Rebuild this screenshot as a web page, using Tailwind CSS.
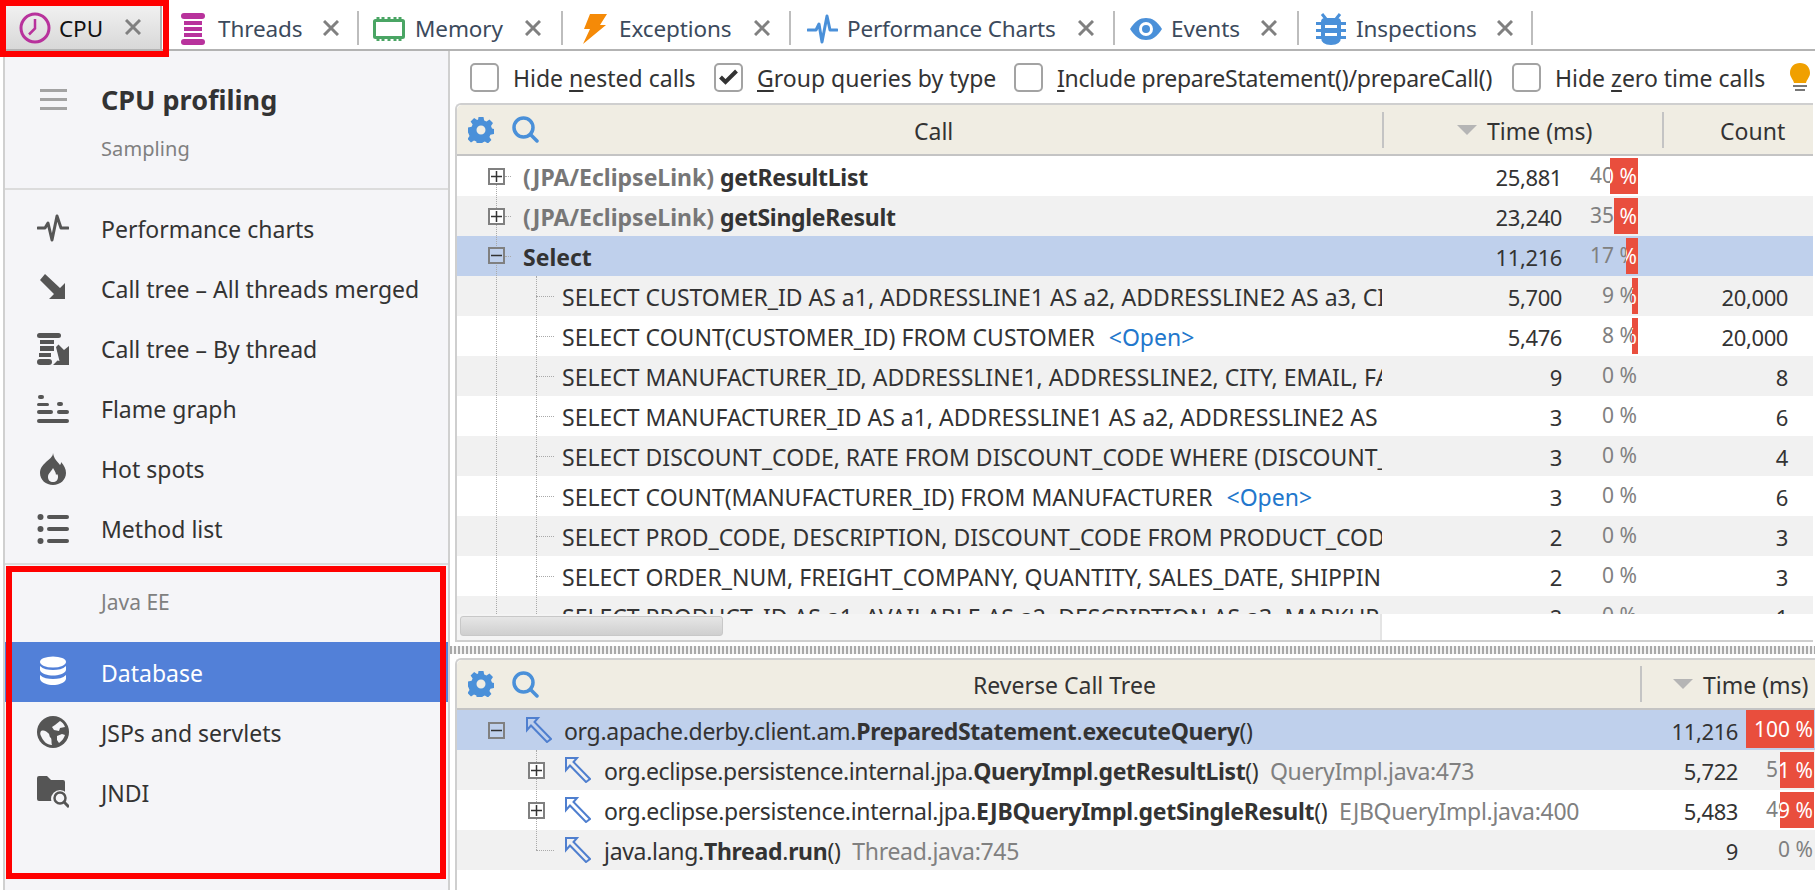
<!DOCTYPE html>
<html lang="en"><head><meta charset="utf-8"><title>CPU profiling</title>
<script src="https://cdn.jsdelivr.net/npm/@tailwindcss/browser@4"></script></head>
<body class="bg-white">
<div class="relative w-[1815px] h-[890px] overflow-hidden flex flex-col bg-white text-[#333] font-['Noto_Sans',sans-serif] text-[23px] leading-none">

<!-- tabs -->
<div class="h-[51px] shrink-0 flex border-b-[2px] border-[#b3b3b3] relative text-[22.5px] tracking-[-0.1px]">
  <div class="w-[162px] h-[49px] ml-0 flex items-center bg-gradient-to-b from-[#f4f4f4] to-[#d8d8d8] border-r-[2px] border-[#b0b0b0] relative text-[#111]">
    <svg class="absolute left-[19px] top-[12px]" width="32" height="32" viewBox="0 0 32 32" fill="none" stroke="#b8329c" stroke-width="3"><circle cx="16" cy="16" r="14"/><path d="M16 7v9.5l-6 6" stroke-width="2.5"/></svg>
    <span class="absolute left-[59px] top-[18px]">CPU</span>
    <svg class="absolute left-[125px] top-[19px]" width="16" height="16" viewBox="0 0 16 16" stroke="#808080" stroke-width="3"><path d="M1 1l14 14M15 1L1 15"/></svg>
  </div>
  <div class="flex items-center h-[49px] w-[197px] relative">
    <svg class="ml-[19px] mt-[8px]" width="24" height="32" viewBox="0 0 24 32" fill="#b8329c"><rect x="0" y="0" width="24" height="6" rx="3"/><rect x="3" y="8" width="18" height="4"/><rect x="3" y="14" width="18" height="4"/><rect x="3" y="20" width="18" height="4"/><rect x="0" y="26" width="24" height="6" rx="3"/></svg>
    <span class="ml-[13px] mt-[9px] w-[82px] text-[#3c4a5c]">Threads</span>
    <svg class="ml-[23px] mt-[6px]" width="16" height="16" viewBox="0 0 16 16" stroke="#808080" stroke-width="3"><path d="M1 1l14 14M15 1L1 15"/></svg>
    <div class="absolute right-0 top-[11px] w-[2px] h-[34px] bg-[#bdbdbd]"></div>
  </div>
  <div class="flex items-center h-[49px] w-[204px] relative">
    <svg class="ml-[14px] mt-[8px]" width="32" height="24" viewBox="0 0 32 24" fill="none" stroke="#4aa564"><rect x="1.5" y="3.5" width="29" height="17" rx="1" stroke-width="3"/><path d="M5 0v3M10 0v3M16 0v3M22 0v3M27 0v3M5 21v3M10 21v3M16 21v3M22 21v3M27 21v3" stroke-width="3"/></svg>
    <span class="ml-[10px] mt-[9px] w-[88px] text-[#3c4a5c]">Memory</span>
    <svg class="ml-[22px] mt-[6px]" width="16" height="16" viewBox="0 0 16 16" stroke="#808080" stroke-width="3"><path d="M1 1l14 14M15 1L1 15"/></svg>
    <div class="absolute right-0 top-[11px] w-[2px] h-[34px] bg-[#bdbdbd]"></div>
  </div>
  <div class="flex items-center h-[49px] w-[228px] relative">
    <svg class="ml-[20px] mt-[8px]" width="24" height="30" viewBox="0 0 24 30" fill="#f58a07"><path d="M7 0h17l-7 11h6L0 30l7-15H1z"/></svg>
    <span class="ml-[12px] mt-[9px] w-[112px] text-[#3c4a5c]">Exceptions</span>
    <svg class="ml-[23px] mt-[6px]" width="16" height="16" viewBox="0 0 16 16" stroke="#808080" stroke-width="3"><path d="M1 1l14 14M15 1L1 15"/></svg>
    <div class="absolute right-0 top-[11px] w-[2px] h-[34px] bg-[#bdbdbd]"></div>
  </div>
  <div class="flex items-center h-[49px] w-[324px] relative">
    <svg class="ml-[16px] mt-[8px]" width="31" height="30" viewBox="0 0 31 30" fill="none" stroke="#4a90d9" stroke-width="3" stroke-linecap="round" stroke-linejoin="round"><path d="M1 16h8l3-6 3 18 5-26 3 14h7"/></svg>
    <span class="ml-[9px] mt-[9px] w-[208px] whitespace-nowrap text-[#3c4a5c] tracking-[-0.2px]">Performance Charts</span>
    <svg class="ml-[23px] mt-[6px]" width="16" height="16" viewBox="0 0 16 16" stroke="#808080" stroke-width="3"><path d="M1 1l14 14M15 1L1 15"/></svg>
    <div class="absolute right-0 top-[11px] w-[2px] h-[34px] bg-[#bdbdbd]"></div>
  </div>
  <div class="flex items-center h-[49px] w-[184px] relative">
    <svg class="ml-[15px] mt-[8px]" width="32" height="22" viewBox="0 0 32 22"><path fill="#4a90d9" d="M0 11C5 3 10 0 16 0s11 3 16 11c-5 8-10 11-16 11S5 19 0 11z"/><circle cx="16" cy="11" r="7" fill="#fff"/><circle cx="16" cy="11" r="4" fill="#4a90d9"/></svg>
    <span class="ml-[9px] mt-[9px] w-[68px] text-[#3c4a5c]">Events</span>
    <svg class="ml-[22px] mt-[6px]" width="16" height="16" viewBox="0 0 16 16" stroke="#808080" stroke-width="3"><path d="M1 1l14 14M15 1L1 15"/></svg>
    <div class="absolute right-0 top-[11px] w-[2px] h-[34px] bg-[#bdbdbd]"></div>
  </div>
  <div class="flex items-center h-[49px] w-[234px] relative">
    <svg class="ml-[17px] mt-[8px]" width="30" height="32" viewBox="0 0 30 32" fill="#4a90d9"><path d="M6 1l4 5M24 1l-4 5" stroke="#4a90d9" stroke-width="3"/><path d="M5 9q0-4 4-4h12q4 0 4 4v15q0 8-10 8T5 24z"/><rect x="0" y="9" width="30" height="3"/><rect x="0" y="16" width="30" height="3"/><rect x="0" y="23" width="30" height="3"/><rect x="9" y="12" width="12" height="3" fill="#fff"/><rect x="9" y="20" width="12" height="3" fill="#fff"/></svg>
    <span class="ml-[10px] mt-[9px] w-[118px] text-[#3c4a5c]">Inspections</span>
    <svg class="ml-[23px] mt-[6px]" width="16" height="16" viewBox="0 0 16 16" stroke="#808080" stroke-width="3"><path d="M1 1l14 14M15 1L1 15"/></svg>
    <div class="absolute right-0 top-[11px] w-[2px] h-[34px] bg-[#bdbdbd]"></div>
  </div>
</div>

<div class="flex flex-1 min-h-0">
  <!-- sidebar -->
  <aside class="w-[447px] shrink-0 ml-[3px] bg-[#f5f5f8] border-l-[2px] border-r-[2px] border-[#d0d0d0] flex flex-col">
    <div class="h-[139px] shrink-0 relative border-b-[2px] border-[#dcdcdc]">
      <div class="absolute left-[35px] top-[38px] w-[27px] flex flex-col gap-[6px]"><div class="h-[3px] bg-[#a3a3a3]"></div><div class="h-[3px] bg-[#a3a3a3]"></div><div class="h-[3px] bg-[#a3a3a3]"></div></div>
      <div class="pl-[96px] pt-[35px] font-bold text-[27px] text-[#333]">CPU profiling</div>
      <div class="pl-[96px] pt-[26px] text-[20px] tracking-[0.1px] text-[#808080]">Sampling</div>
    </div>
    <nav class="flex flex-col pt-[9px]">
      <div class="h-[60px] flex items-center pl-[32px]"><svg width="32" height="32" viewBox="0 0 32 32" fill="none" stroke="#555" stroke-width="3" stroke-linecap="round" stroke-linejoin="round"><path d="M1 15h7l3-5 4 17 5-24 4 12h7"/></svg><span class="ml-[32px]">Performance charts</span></div>
      <div class="h-[60px] flex items-center pl-[32px]"><svg width="32" height="32" viewBox="0 0 32 32" fill="#555"><path d="M8 1l15 14 5-5v16H12l5-5L3 7z"/></svg><span class="ml-[32px]">Call tree – All threads merged</span></div>
      <div class="h-[60px] flex items-center pl-[32px]"><svg width="32" height="32" viewBox="0 0 32 32" fill="#555"><rect x="0" y="0" width="24" height="5" rx="2.500"/><rect x="3" y="7" width="14" height="4"/><rect x="3" y="13" width="14" height="5"/><rect x="2" y="20" width="12" height="4"/><rect x="0" y="26" width="15" height="6" rx="3"/><path d="M19 14l2.500-2.500 5.500 5.500 5-4v19H16l4.500-4.500 2 .5z"/></svg><span class="ml-[32px]">Call tree – By thread</span></div>
      <div class="h-[60px] flex items-center pl-[32px]"><svg width="32" height="32" viewBox="0 0 32 32" fill="#555"><rect x="1" y="2" width="6" height="4" rx="2"/><rect x="20" y="9" width="6" height="4" rx="2"/><rect x="0" y="10" width="12" height="3" rx="1.5"/><rect x="0" y="17" width="16" height="4" rx="2"/><rect x="20" y="17" width="12" height="4" rx="2"/><rect x="0" y="26" width="32" height="4" rx="2"/></svg><span class="ml-[32px]">Flame graph</span></div>
      <div class="h-[60px] flex items-center pl-[32px]"><svg width="32" height="32" viewBox="0 0 32 32" fill="#555"><path fill-rule="evenodd" d="M16 0c1 6 4 8 7 12 1-1 1-2 1-3 3 3 5 7 5 11 0 7-6 12-13 12S3 27 3 20c0-5 3-8 6-11 3-3 7-5 7-9zm0 15c-1 3-5 5-5 9 0 3 2 5 5 5s5-2 5-5c0-1 0-2-1-3l-1 1c0-3-2-5-3-7z"/></svg><span class="ml-[32px]">Hot spots</span></div>
      <div class="h-[60px] flex items-center pl-[32px]"><svg width="32" height="32" viewBox="0 0 32 32" fill="#555"><circle cx="3.5" cy="4" r="3"/><circle cx="3.5" cy="16" r="3"/><circle cx="3.5" cy="28" r="3"/><rect x="10" y="2" width="22" height="4" rx="2"/><rect x="10" y="14" width="22" height="4" rx="2"/><rect x="10" y="26" width="22" height="4" rx="2"/></svg><span class="ml-[32px]">Method list</span></div>
    </nav>
    <div class="h-[2px] mt-[4px] bg-[#dcdcdc]"></div>
    <div class="h-[77px] shrink-0 pl-[96px] pt-[27px] text-[21px] text-[#808080]">Java EE</div>
    <div class="h-[60px] flex items-center pl-[32px] bg-[#5280d8] text-white"><svg width="32" height="32" viewBox="0 0 32 32" fill="#fff"><ellipse cx="16" cy="6" rx="13" ry="5.5"/><path d="M3 10c3 3 8 4 13 4s10-1 13-4v4c-1 4-8 5.5-13 5.5S4 18 3 14zM3 19c3 3 8 4 13 4s10-1 13-4v4c-1 4-8 6-13 6s-12-2-13-6z"/></svg><span class="ml-[32px] pt-[2px]">Database</span></div>
    <div class="h-[60px] flex items-center pl-[32px]"><svg width="32" height="32" viewBox="0 0 32 32"><circle cx="16" cy="16" r="16" fill="#555"/><path fill="#f5f5f8" d="M4 15c3-1 5 0 7 2 2 1 1 4 3 5 1 2 0 5 1 7-5 0-9-4-11-9-1-2-1-3 0-5zM18 9l5-4c2 1 4 3 5 6l-5 1-1 3-5-1-2-3zM20 20l5-2 3 1c-1 3-3 6-6 8l-2-3z"/></svg><span class="ml-[32px] pt-[2px]">JSPs and servlets</span></div>
    <div class="h-[60px] flex items-center pl-[32px]"><svg width="32" height="32" viewBox="0 0 32 32"><path fill="#555" d="M0 2q0-2 2-2h8l4 4h12q2 0 2 2v18q0 1-1 1H2q-2 0-2-2z"/><circle cx="23" cy="23" r="9" fill="#f5f5f8"/><circle cx="23" cy="22" r="5.5" fill="none" stroke="#555" stroke-width="2.5"/><path d="M27 26l5 5" stroke="#555" stroke-width="3"/></svg><span class="ml-[32px] pt-[2px]">JNDI</span></div>
  </aside>

  <!-- right -->
  <main class="flex-1 min-w-0 flex flex-col">
    <div class="h-[52px] shrink-0 flex items-center text-[#333] pl-[20px] relative">
      <div class="w-[29px] h-[29px] rounded-[5px] border-[2px] border-[#a3a3a3] bg-white"></div>
      <span class="ml-[14px] pt-[2px] w-[180px] whitespace-nowrap">Hide <u class="decoration-[2px] underline-offset-[3px]">n</u>ested calls</span>
      <div class="ml-[21px] w-[29px] h-[29px] rounded-[5px] border-[2px] border-[#a3a3a3] bg-white flex items-center justify-center"><svg width="19" height="16" viewBox="0 0 19 16" fill="none" stroke="#333" stroke-width="4"><path d="M1.5 8l5 5L17.5 2"/></svg></div>
      <span class="ml-[14px] pt-[2px] w-[236px] whitespace-nowrap"><u class="decoration-[2px] underline-offset-[3px]">G</u>roup queries by type</span>
      <div class="ml-[21px] w-[29px] h-[29px] rounded-[5px] border-[2px] border-[#a3a3a3] bg-white"></div>
      <span class="ml-[14px] pt-[2px] w-[434px] whitespace-nowrap tracking-[-0.23px]"><u class="decoration-[2px] underline-offset-[3px]">I</u>nclude prepareStatement()/prepareCall()</span>
      <div class="ml-[21px] w-[29px] h-[29px] rounded-[5px] border-[2px] border-[#a3a3a3] bg-white"></div>
      <span class="ml-[14px] pt-[2px] w-[208px] whitespace-nowrap">Hide <u class="decoration-[2px] underline-offset-[3px]">z</u>ero time calls</span>
      <svg class="ml-[27px] shrink-0" width="20" height="28" viewBox="0 0 20 28"><path fill="#f0a000" d="M10 0c6 0 10 4 10 10 0 4-3 6-4 10H4C3 16 0 14 0 10 0 4 4 0 10 0z"/><rect x="3" y="22" width="14" height="2" fill="#777"/><rect x="5" y="26" width="10" height="2" fill="#777"/></svg>
    </div>

    <!-- top panel -->
    <section class="ml-[5px] w-[1358px] h-[539px] shrink-0 flex flex-col border-t-[2px] border-l-[2px] border-b-[2px] border-[#cfcfcf] rounded-tl-[6px] text-[#333]">
      <div class="h-[49px] shrink-0 flex items-center bg-[#f0ede3] rounded-tl-[5px] [&_span]:pt-[3px]">
        <div class="w-[925px] flex items-center shrink-0">
          <svg class="ml-[11px]" width="26" height="26" viewBox="0 0 26 26" fill="#4a90d9"><path fill-rule="evenodd" d="M10.5 0h5l.7 3.6 2.3 1 3-2 3.5 3.5-2 3 1 2.3 2 .6v5l-3.6.7-1 2.3 2 3-3.5 3.5-3-2-2.3 1-.6 2.5h-5l-.7-3.6-2.3-1-3 2-3.5-3.5 2-3-1-2.3L0 15.500v-5l3.600-.7 1-2.300-2-3L6.100 1l3 2 1-.4zM13 8.500a4.500 4.500 0 1 0 0 9 4.500 4.500 0 0 0 0-9z"/></svg>
          <svg class="ml-[18px]" width="27" height="27" viewBox="0 0 27 27" fill="none" stroke="#4a90d9" stroke-width="3.500" stroke-linecap="round"><circle cx="11.500" cy="11.500" r="9.500"/><path d="M18.500 18.500l6.500 6.500"/></svg>
          <span class="ml-[375px]">Call</span>
        </div>
        <div class="w-[2px] h-[36px] bg-[#c4c4c4] shrink-0"></div>
        <div class="w-[278px] shrink-0 flex items-center"><div class="ml-[73px] w-0 h-0 border-x-[10px] border-x-transparent border-t-[10px] border-t-[#b5b5b5]"></div><span class="ml-[10px] whitespace-nowrap">Time (ms)</span></div>
        <div class="w-[2px] h-[36px] bg-[#c4c4c4] shrink-0"></div>
        <span class="ml-[56px]">Count</span>
      </div>
      <div class="h-[2px] shrink-0 bg-[#c4c4c4]"></div>
      <div class="h-[458px] shrink-0 overflow-hidden relative whitespace-nowrap [&>div>div:not(:nth-child(3))]:pt-[2px]">
        <div class="flex h-10 items-center bg-white"><div class="w-[925px] shrink-0 pl-[66px] font-bold"><span class="text-[#777]">(JPA/EclipseLink)</span> <span class="text-[#333] tracking-[-0.3px]">getResultList</span></div><div class="w-[180px] text-right text-[22px] tracking-[-0.4px]">25,881</div><div class="relative w-[76px] h-full flex items-center justify-end pr-[1px] pb-[2px] text-[21px] text-[#808080]">40 %<div class="absolute right-0 inset-y-[2px] w-[28px] bg-[#e94e3d] overflow-hidden flex items-center justify-end pr-[1px] text-white">40&nbsp;%</div></div></div>
        <div class="flex h-10 items-center bg-[#f1f1f1]"><div class="w-[925px] shrink-0 pl-[66px] font-bold"><span class="text-[#777]">(JPA/EclipseLink)</span> <span class="text-[#333] tracking-[-0.3px]">getSingleResult</span></div><div class="w-[180px] text-right text-[22px] tracking-[-0.4px]">23,240</div><div class="relative w-[76px] h-full flex items-center justify-end pr-[1px] pb-[2px] text-[21px] text-[#808080]">35 %<div class="absolute right-0 inset-y-[2px] w-[24px] bg-[#e94e3d] overflow-hidden flex items-center justify-end pr-[1px] text-white">35&nbsp;%</div></div></div>
        <div class="flex h-10 items-center bg-[#bfd0ec]"><div class="w-[925px] shrink-0 pl-[66px] font-bold">Select</div><div class="w-[180px] text-right text-[22px] tracking-[-0.4px]">11,216</div><div class="relative w-[76px] h-full flex items-center justify-end pr-[1px] pb-[2px] text-[21px] text-[#808080]">17 %<div class="absolute right-0 inset-y-[2px] w-[12px] bg-[#e94e3d] overflow-hidden flex items-center justify-end pr-[1px] text-white">17&nbsp;%</div></div></div>
        <div class="flex h-10 items-center bg-[#f1f1f1]"><div class="w-[925px] shrink-0 pl-[105px] overflow-hidden leading-[32px]">SELECT CUSTOMER_ID AS a1, ADDRESSLINE1 AS a2, ADDRESSLINE2 AS a3, CITY AS a4</div><div class="w-[180px] text-right text-[22px] tracking-[-0.4px]">5,700</div><div class="relative w-[76px] h-full flex items-center justify-end pr-[1px] pb-[2px] text-[21px] text-[#808080]">9 %<div class="absolute right-0 inset-y-[2px] w-[6px] bg-[#e94e3d] overflow-hidden flex items-center justify-end pr-[1px] text-white">9&nbsp;%</div></div><div class="w-[150px] text-right text-[22px] tracking-[-0.4px]">20,000</div></div>
        <div class="flex h-10 items-center bg-white"><div class="w-[925px] shrink-0 pl-[105px] overflow-hidden leading-[32px]">SELECT COUNT(CUSTOMER_ID) FROM CUSTOMER <span class="ml-[8px] text-[#2277cc]">&lt;Open&gt;</span></div><div class="w-[180px] text-right text-[22px] tracking-[-0.4px]">5,476</div><div class="relative w-[76px] h-full flex items-center justify-end pr-[1px] pb-[2px] text-[21px] text-[#808080]">8 %<div class="absolute right-0 inset-y-[2px] w-[6px] bg-[#e94e3d] overflow-hidden flex items-center justify-end pr-[1px] text-white">8&nbsp;%</div></div><div class="w-[150px] text-right text-[22px] tracking-[-0.4px]">20,000</div></div>
        <div class="flex h-10 items-center bg-[#f1f1f1]"><div class="w-[925px] shrink-0 pl-[105px] overflow-hidden leading-[32px]">SELECT MANUFACTURER_ID, ADDRESSLINE1, ADDRESSLINE2, CITY, EMAIL, FAX, NAME</div><div class="w-[180px] text-right text-[22px] tracking-[-0.4px]">9</div><div class="w-[76px] flex justify-end pr-[1px] pb-[2px] text-[21px] text-[#808080]">0 %</div><div class="w-[150px] text-right text-[22px] tracking-[-0.4px]">8</div></div>
        <div class="flex h-10 items-center bg-white"><div class="w-[925px] shrink-0 pl-[105px] overflow-hidden leading-[32px]">SELECT MANUFACTURER_ID AS a1, ADDRESSLINE1 AS a2, ADDRESSLINE2 AS a3, CITY</div><div class="w-[180px] text-right text-[22px] tracking-[-0.4px]">3</div><div class="w-[76px] flex justify-end pr-[1px] pb-[2px] text-[21px] text-[#808080]">0 %</div><div class="w-[150px] text-right text-[22px] tracking-[-0.4px]">6</div></div>
        <div class="flex h-10 items-center bg-[#f1f1f1]"><div class="w-[925px] shrink-0 pl-[105px] overflow-hidden leading-[32px]">SELECT DISCOUNT_CODE, RATE FROM DISCOUNT_CODE WHERE (DISCOUNT_CODE = ?)</div><div class="w-[180px] text-right text-[22px] tracking-[-0.4px]">3</div><div class="w-[76px] flex justify-end pr-[1px] pb-[2px] text-[21px] text-[#808080]">0 %</div><div class="w-[150px] text-right text-[22px] tracking-[-0.4px]">4</div></div>
        <div class="flex h-10 items-center bg-white"><div class="w-[925px] shrink-0 pl-[105px] overflow-hidden leading-[32px]">SELECT COUNT(MANUFACTURER_ID) FROM MANUFACTURER <span class="ml-[8px] text-[#2277cc]">&lt;Open&gt;</span></div><div class="w-[180px] text-right text-[22px] tracking-[-0.4px]">3</div><div class="w-[76px] flex justify-end pr-[1px] pb-[2px] text-[21px] text-[#808080]">0 %</div><div class="w-[150px] text-right text-[22px] tracking-[-0.4px]">6</div></div>
        <div class="flex h-10 items-center bg-[#f1f1f1]"><div class="w-[925px] shrink-0 pl-[105px] overflow-hidden leading-[32px]">SELECT PROD_CODE, DESCRIPTION, DISCOUNT_CODE FROM PRODUCT_CODE WHERE (X)</div><div class="w-[180px] text-right text-[22px] tracking-[-0.4px]">2</div><div class="w-[76px] flex justify-end pr-[1px] pb-[2px] text-[21px] text-[#808080]">0 %</div><div class="w-[150px] text-right text-[22px] tracking-[-0.4px]">3</div></div>
        <div class="flex h-10 items-center bg-white"><div class="w-[925px] shrink-0 pl-[105px] overflow-hidden leading-[32px]">SELECT ORDER_NUM, FREIGHT_COMPANY, QUANTITY, SALES_DATE, SHIPPING_COST, X</div><div class="w-[180px] text-right text-[22px] tracking-[-0.4px]">2</div><div class="w-[76px] flex justify-end pr-[1px] pb-[2px] text-[21px] text-[#808080]">0 %</div><div class="w-[150px] text-right text-[22px] tracking-[-0.4px]">3</div></div>
        <div class="flex h-10 items-center bg-[#f1f1f1]"><div class="w-[925px] shrink-0 pl-[105px] overflow-hidden leading-[32px]">SELECT PRODUCT_ID AS a1, AVAILABLE AS a2, DESCRIPTION AS a3, MARKUP AS a4, X</div><div class="w-[180px] text-right text-[22px] tracking-[-0.4px]">2</div><div class="w-[76px] flex justify-end pr-[1px] pb-[2px] text-[21px] text-[#808080]">0 %</div><div class="w-[150px] text-right text-[22px] tracking-[-0.4px]">1</div></div>
        <!-- tree connectors -->
        <div class="absolute left-[39px] top-[28px] h-[430px] border-l border-dotted border-[#aaa]"></div>
        <div class="absolute left-[79px] top-[120px] h-[340px] border-l border-dotted border-[#aaa]"></div>
        <div class="absolute left-[48px] top-[20px] w-[6px] border-t border-dotted border-[#aaa]"></div>
        <div class="absolute left-[48px] top-[60px] w-[6px] border-t border-dotted border-[#aaa]"></div>
        <div class="absolute left-[48px] top-[100px] w-[6px] border-t border-dotted border-[#aaa]"></div>
        <div class="absolute left-[79px] top-[140px] w-[18px] border-t border-dotted border-[#aaa]"></div>
        <div class="absolute left-[79px] top-[180px] w-[18px] border-t border-dotted border-[#aaa]"></div>
        <div class="absolute left-[79px] top-[220px] w-[18px] border-t border-dotted border-[#aaa]"></div>
        <div class="absolute left-[79px] top-[260px] w-[18px] border-t border-dotted border-[#aaa]"></div>
        <div class="absolute left-[79px] top-[300px] w-[18px] border-t border-dotted border-[#aaa]"></div>
        <div class="absolute left-[79px] top-[340px] w-[18px] border-t border-dotted border-[#aaa]"></div>
        <div class="absolute left-[79px] top-[380px] w-[18px] border-t border-dotted border-[#aaa]"></div>
        <div class="absolute left-[79px] top-[420px] w-[18px] border-t border-dotted border-[#aaa]"></div>
        <div class="absolute left-[31px] top-[12px] w-[17px] h-[17px] border-[2px] border-[#808080] bg-white flex items-center justify-center"><svg width="11" height="11" viewBox="0 0 11 11" stroke="#333" stroke-width="1.500"><path d="M0 5.500h11M5.500 0v11"/></svg></div>
        <div class="absolute left-[31px] top-[52px] w-[17px] h-[17px] border-[2px] border-[#808080] bg-white flex items-center justify-center"><svg width="11" height="11" viewBox="0 0 11 11" stroke="#333" stroke-width="1.500"><path d="M0 5.500h11M5.500 0v11"/></svg></div>
        <div class="absolute left-[31px] top-[91px] w-[17px] h-[17px] border-[2px] border-[#808080] bg-[#bfd0ec] flex items-center justify-center"><svg width="11" height="11" viewBox="0 0 11 11" stroke="#333" stroke-width="1.500"><path d="M0 5.500h11"/></svg></div>
      </div>
      <div class="flex-1 flex min-h-0 bg-white">
        <div class="w-[925px] bg-[#f4f4f4] border-r-[2px] border-[#e4e4e4] pl-[3px] pt-[2px]"><div class="w-[263px] h-[20px] rounded-[3px] border border-[#c8c8c8] bg-gradient-to-b from-[#e6e6e6] to-[#cfcfcf]"></div></div>
      </div>
    </section>

    <!-- splitter -->
    <div class="h-[16px] shrink-0 flex items-center"><div class="w-full h-[8px] bg-[repeating-linear-gradient(90deg,#a9a9a9_0,#a9a9a9_2px,#f2f2f2_2px,#f2f2f2_4px)]"></div></div>

    <!-- bottom panel -->
    <section class="ml-[5px] flex-1 min-h-0 flex flex-col border-t-[2px] border-l-[2px] border-[#cfcfcf] rounded-tl-[6px] text-[#333] whitespace-nowrap">
      <div class="h-[48px] shrink-0 flex items-center bg-[#f0ede3] rounded-tl-[5px] [&_span]:pt-[2px]">
        <div class="w-[1183px] flex items-center shrink-0">
          <svg class="ml-[11px]" width="26" height="26" viewBox="0 0 26 26" fill="#4a90d9"><path fill-rule="evenodd" d="M10.5 0h5l.7 3.6 2.3 1 3-2 3.5 3.5-2 3 1 2.3 2 .6v5l-3.6.7-1 2.3 2 3-3.5 3.5-3-2-2.3 1-.6 2.5h-5l-.7-3.6-2.3-1-3 2-3.5-3.5 2-3-1-2.3L0 15.500v-5l3.600-.7 1-2.300-2-3L6.100 1l3 2 1-.4zM13 8.500a4.500 4.500 0 1 0 0 9 4.500 4.500 0 0 0 0-9z"/></svg>
          <svg class="ml-[18px]" width="27" height="27" viewBox="0 0 27 27" fill="none" stroke="#4a90d9" stroke-width="3.500" stroke-linecap="round"><circle cx="11.500" cy="11.500" r="9.500"/><path d="M18.500 18.500l6.500 6.500"/></svg>
          <span class="ml-[434px]">Reverse Call Tree</span>
        </div>
        <div class="w-[2px] h-[36px] bg-[#c4c4c4] shrink-0"></div>
        <div class="ml-[31px] w-0 h-0 border-x-[10px] border-x-transparent border-t-[10px] border-t-[#b5b5b5]"></div>
        <span class="ml-[10px]">Time (ms)</span>
      </div>
      <div class="h-[2px] shrink-0 bg-[#c4c4c4]"></div>
      <div class="relative flex-1 min-h-0 [&>div>div:not(:nth-child(3))]:pt-[2px]">
        <div class="flex h-10 items-center bg-[#bfd0ec]"><div class="w-[1183px] shrink-0 pl-[107px] tracking-[-0.3px]">org.apache.derby.client.am.<b>PreparedStatement</b>.<b>executeQuery</b>()</div><div class="w-[98px] text-right text-[22px] tracking-[-0.4px]">11,216</div><div class="relative w-[76px] h-full flex items-center justify-end pr-[1px] pb-[4px] text-[21px] text-[#808080]">100 %<div class="absolute right-0 top-0 bottom-[2px] w-[68px] bg-[#e94e3d] overflow-hidden flex items-center justify-end pr-[1px] text-white">100&nbsp;%</div></div></div>
        <div class="flex h-10 items-center bg-[#f1f1f1]"><div class="w-[1183px] shrink-0 pl-[147px] tracking-[-0.38px]">org.eclipse.persistence.internal.jpa.<b>QueryImpl</b>.<b>getResultList</b>() <span class="ml-[6px] text-[#808080]">QueryImpl.java:473</span></div><div class="w-[98px] text-right text-[22px] tracking-[-0.4px]">5,722</div><div class="relative w-[76px] h-full flex items-center justify-end pr-[1px] pb-[2px] text-[21px] text-[#808080]">51 %<div class="absolute right-0 inset-y-[2px] w-[34px] bg-[#e94e3d] overflow-hidden flex items-center justify-end pr-[1px] text-white">51&nbsp;%</div></div></div>
        <div class="flex h-10 items-center bg-white"><div class="w-[1183px] shrink-0 pl-[147px] tracking-[-0.3px]">org.eclipse.persistence.internal.jpa.<b>EJBQueryImpl</b>.<b>getSingleResult</b>() <span class="ml-[6px] text-[#808080]">EJBQueryImpl.java:400</span></div><div class="w-[98px] text-right text-[22px] tracking-[-0.4px]">5,483</div><div class="relative w-[76px] h-full flex items-center justify-end pr-[1px] pb-[2px] text-[21px] text-[#808080]">49 %<div class="absolute right-0 inset-y-[2px] w-[34px] bg-[#e94e3d] overflow-hidden flex items-center justify-end pr-[1px] text-white">49&nbsp;%</div></div></div>
        <div class="flex h-10 items-center bg-[#f1f1f1]"><div class="w-[1183px] shrink-0 pl-[147px] tracking-[-0.3px]">java.lang.<b>Thread</b>.<b>run</b>() <span class="ml-[6px] text-[#808080]">Thread.java:745</span></div><div class="w-[98px] text-right text-[22px] tracking-[-0.4px]">9</div><div class="w-[76px] flex justify-end pr-[1px] pb-[2px] text-[21px] text-[#808080]">0 %</div></div>
        <!-- connectors and markers -->
        <div class="absolute left-[79px] top-[40px] h-[100px] border-l border-dotted border-[#aaa]"></div>
        <div class="absolute left-[79px] top-[140px] w-[18px] border-t border-dotted border-[#aaa]"></div>
        <div class="absolute left-[31px] top-[12px] w-[17px] h-[17px] border-[2px] border-[#808080] bg-[#bfd0ec] flex items-center justify-center"><svg width="11" height="11" viewBox="0 0 11 11" stroke="#333" stroke-width="1.500"><path d="M0 5.500h11"/></svg></div>
        <div class="absolute left-[71px] top-[52px] w-[17px] h-[17px] border-[2px] border-[#808080] bg-white flex items-center justify-center"><svg width="11" height="11" viewBox="0 0 11 11" stroke="#333" stroke-width="1.500"><path d="M0 5.500h11M5.500 0v11"/></svg></div>
        <div class="absolute left-[71px] top-[92px] w-[17px] h-[17px] border-[2px] border-[#808080] bg-white flex items-center justify-center"><svg width="11" height="11" viewBox="0 0 11 11" stroke="#333" stroke-width="1.500"><path d="M0 5.500h11M5.500 0v11"/></svg></div>
        <svg class="absolute left-[69px] top-[7px]" width="26" height="26" viewBox="0 0 26 26" fill="none" stroke="#4f7fcf" stroke-width="2"><path d="M1 1h11L8.500 5 25 22l-4 3L5 8.500 1 13z"/></svg>
        <svg class="absolute left-[108px] top-[47px]" width="26" height="26" viewBox="0 0 26 26" fill="none" stroke="#4f7fcf" stroke-width="2"><path d="M1 1h11L8.500 5 25 22l-4 3L5 8.500 1 13z"/></svg>
        <svg class="absolute left-[108px] top-[87px]" width="26" height="26" viewBox="0 0 26 26" fill="none" stroke="#4f7fcf" stroke-width="2"><path d="M1 1h11L8.500 5 25 22l-4 3L5 8.500 1 13z"/></svg>
        <svg class="absolute left-[108px] top-[127px]" width="26" height="26" viewBox="0 0 26 26" fill="none" stroke="#4f7fcf" stroke-width="2"><path d="M1 1h11L8.500 5 25 22l-4 3L5 8.500 1 13z"/></svg>
      </div>
    </section>
  </main>
</div>

<!-- annotation boxes -->
<div class="absolute left-0 top-0 w-[169px] h-[57px] border-[6px] border-[#ff0000] pointer-events-none"></div>
<div class="absolute left-[6px] top-[566px] w-[440px] h-[313px] border-[6px] border-[#ff0000] pointer-events-none"></div>
</div>
</body></html>
